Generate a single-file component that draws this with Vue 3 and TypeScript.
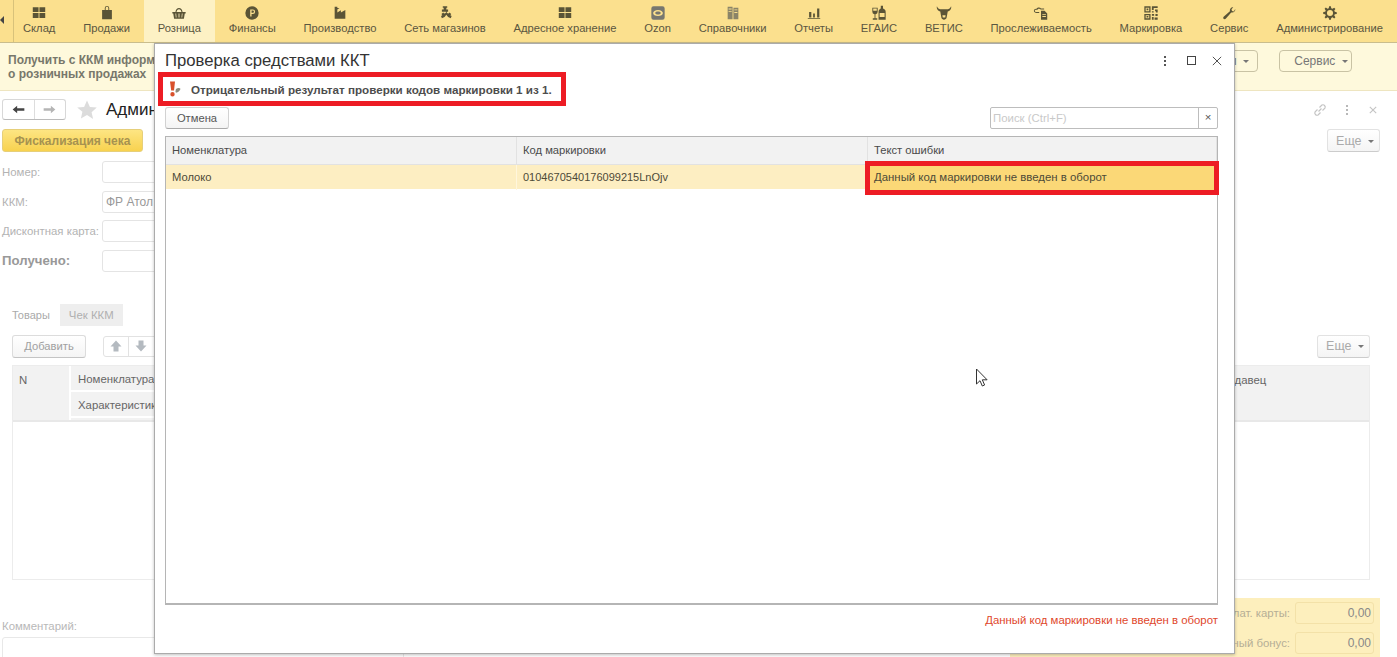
<template>
  <div class="app">
    <nav class="topnav">
      <div class="collapse"><span class="collapse-arrow"></span></div>
      <div class="nav-items">
        <div v-for="item in navItems" :key="item.label" class="nav-item" :class="{ active: item.active }">
          <svg class="nav-icon" viewBox="0 0 18 18" :style="{ fill: item.color || '#5a5436' }">
            <path fill-rule="evenodd" :d="item.icon" />
          </svg>
          <span>{{ item.label }}</span>
        </div>
      </div>
    </nav>

    <div class="notice">
      <div class="notice-text">Получить с ККМ информацию<br />о розничных продажах</div>
      <div class="notice-buttons">
        <button class="outline-btn">Отчеты <i class="caret"></i></button>
        <button class="outline-btn service">Сервис <i class="caret"></i></button>
      </div>
    </div>

    <main class="doc">
      <div class="doc-head">
        <div class="arrows">
          <span class="arrow-cell">
            <svg class="arrow-dark" viewBox="0 0 14 10"><path d="M0.5 5L5.5.8v2.700H13.5v3H5.5v2.700z" /></svg>
          </span>
          <span class="arrow-cell">
            <svg class="arrow-light" viewBox="0 0 14 10"><path d="M13.5 5L8.5.8v2.700H.5v3h8v2.700z" /></svg>
          </span>
        </div>
        <svg class="star" viewBox="0 0 20 20"><path d="M10 0.5l2.900 6.400 6.900.7-5.200 4.600 1.500 6.900L10 15.100l-6.100 3.500 1.500-6.900L.2 7.600l6.900-.7z" /></svg>
        <h1 class="doc-title">Администратор</h1>
        <div class="doc-tools">
          <svg class="tool-link" viewBox="0 0 16 16"><path d="M6.5 9.5l3-3M5.5 7.5l-2.400 2.400a2.200 2.200 0 0 0 3 3l2.400-2.400M10.5 8.5l2.400-2.400a2.200 2.200 0 0 0-3-3L7.5 5.5" /></svg>
          <span class="dots"><i></i><i></i><i></i></span>
          <svg class="tool-close" viewBox="0 0 10 10"><path d="M1 1l8 8M9 1L1 9" /></svg>
        </div>
      </div>

      <div class="commands">
        <button class="fiscal-btn">Фискализация чека</button>
        <button class="more-btn">Еще <i class="caret"></i></button>
      </div>

      <div class="fields">
        <template v-for="field in fields" :key="field.label">
          <label :class="{ strong: field.strong }">{{ field.label }}</label>
          <div class="field-input">{{ field.value }}</div>
        </template>
      </div>

      <div class="tabs">
        <span class="tab">Товары</span>
        <span class="tab current">Чек ККМ</span>
      </div>

      <div class="list-toolbar">
        <button class="plain-btn">Добавить</button>
        <div class="updown">
          <span class="updown-cell"><svg viewBox="0 0 12 12"><path d="M6 .5l5.5 6H8.5V11.5h-5V6.5H.5z" /></svg></span>
          <span class="updown-cell"><svg viewBox="0 0 12 12"><path d="M6 11.5L.5 5.5h3V.5h5v5h3z" /></svg></span>
        </div>
        <button class="more-btn push">Еще <i class="caret"></i></button>
      </div>

      <div class="goods">
        <div class="goods-head">
          <div class="goods-n">N</div>
          <div class="goods-name">
            <div>Номенклатура</div>
            <div>Характеристика</div>
          </div>
          <div class="goods-seller">Продавец</div>
        </div>
      </div>

      <div class="doc-bottom">
        <div class="comment">
          <label>Комментарий:</label>
          <div class="comment-input"></div>
        </div>
        <div class="totals">
          <div v-for="total in totals" :key="total" class="total-row">
            <label>{{ total }}</label>
            <div class="total-input">0,00</div>
          </div>
        </div>
      </div>
    </main>

    <section class="modal">
      <header class="modal-head">
        <h2>Проверка средствами ККТ</h2>
        <div class="modal-tools">
          <span class="dots dark"><i></i><i></i><i></i></span>
          <span class="maximize"></span>
          <svg class="modal-close" viewBox="0 0 12 12"><path d="M1 1l10 10M11 1L1 11" /></svg>
        </div>
      </header>

      <div class="message">
        <svg class="message-icon" viewBox="0 0 12 16">
          <path fill="#d9512c" d="M1 .5h5L5 9.5H2.200zM3.5 11a2.200 2.200 0 1 1 0 4.400 2.200 2.200 0 0 1 0-4.400z" />
          <path fill="#8c8c7c" d="M7 8c1.800-1.500 3.800-1.200 4.300-.4.500 1-1.200 3.200-3.300 4-1 .3-1.600-.2-1.500-1.100 0-.9.200-1.800.5-2.500z" />
        </svg>
        <span>{{ resultText }}</span>
      </div>

      <div class="modal-toolbar">
        <button class="plain-btn cancel">Отмена</button>
        <div class="search">
          <span class="search-text">Поиск (Ctrl+F)</span>
          <span class="search-clear">×</span>
        </div>
      </div>

      <div class="check-table">
        <div class="check-row head">
          <div v-for="col in columns" :key="col" class="check-cell">{{ col }}</div>
        </div>
        <div class="check-row selected">
          <div class="check-cell">Молоко</div>
          <div class="check-cell code">0104670540176099215LnOjv</div>
          <div class="check-cell error">{{ errorText }}</div>
        </div>
      </div>

      <footer class="modal-foot">{{ errorText }}</footer>
    </section>

    <svg class="cursor" viewBox="0 0 14 20">
      <path d="M1.5 1v15l3.500-3.300 2.300 5.300 2.300-1-2.300-5.200h4.800z" />
    </svg>
  </div>
</template>

<script setup lang="ts">
interface NavItem {
  label: string
  icon: string
  active?: boolean
  color?: string
}

const grid = 'M2 2.5h6.5V8H2zM9.5 2.5H16V8H9.5zM2 9h6.5v5.5H2zM9.5 9H16v5.500H9.5z'

const navItems: NavItem[] = [
  { label: 'Склад', icon: grid },
  { label: 'Продажи', icon: 'M3.5 5.5h11V16h-11zM6.5 5.5V3.5a2.500 2.500 0 0 1 5 0v2h-1v-2a1.500 1.500 0 0 0-3 0v2z' },
  {
    label: 'Розница',
    active: true,
    icon: 'M1.5 8h15v1.500h-1L14.5 15.5h-11L2.5 9.5h-1zM5 9.5l.4 4.500h.8l-.4-4.500zM8.5 9.5V14h1V9.5zM12.2 9.5l-.4 4.500h.8l.4-4.500zM5 8c.3-2.800 2-4.500 4-4.500s3.700 1.700 4 4.500h-1.200c-.3-2-1.400-3.300-2.800-3.300S6.500 6 6.200 8z'
  },
  {
    label: 'Финансы',
    icon: 'M9 1.5a7.500 7.500 0 1 0 0 15 7.500 7.500 0 0 0 0-15zM7 5h3a2.500 2.500 0 0 1 0 5H8.5v3H7zM8.5 6.3v2.400H10a1.200 1.200 0 0 0 0-2.400z'
  },
  { label: 'Производство', icon: 'M3 2h3v1.500h2.500L6 5v3.500l4-2.500v2.500l5-3V15.5H3z' },
  {
    label: 'Сеть магазинов',
    icon: 'M6.5 1.500h5v1.500h-1v2h2v2.500h-1.500V9l2 .5 1-1 2 1.500-1 1.500 1.500 1-1 2.500-3-1.500-2-2.500-2 2.500-3 1.500-1-2.500 1.500-1-1-1.500 2-1.500 1 1 2-.5V7.500H5.500V5h2V3h-1z'
  },
  { label: 'Адресное хранение', icon: grid },
  {
    label: 'Ozon',
    color: '#77776f',
    icon: 'M4 1.5h10a2.500 2.500 0 0 1 2.500 2.500v10a2.500 2.500 0 0 1-2.500 2.500H4A2.500 2.500 0 0 1 1.5 14V4A2.500 2.500 0 0 1 4 1.500zM9 5.5C5.800 5.500 3.500 7 3.500 9S5.800 12.500 9 12.500 14.500 11 14.500 9 12.200 5.500 9 5.500zM9 7.300c1.900 0 3.200.7 3.200 1.700S10.900 10.700 9 10.700 5.800 10 5.800 9 7.100 7.300 9 7.300z'
  },
  {
    label: 'Справочники',
    color: '#8a8468',
    icon: 'M3 2h5.5v14H3zM4 4v1h3.500V4zM4 7v1h3.500V7zM9.5 3H15v13H9.5zM10.5 5v1H14V5zM10.5 8v1H14V8z'
  },
  { label: 'Отчеты', icon: 'M2 14.500h14v1H2zM3.5 8h2.500v6H3.5zM8 9.500h2v4.500H8zM12.5 4h2.500v10h-2.500z' },
  {
    label: 'ЕГАИС',
    icon: 'M1.5 3h6v4.500a3 3 0 0 1-2.500 3V15h2v1.500H2V15h2v-4.500a3 3 0 0 1-2.500-3zM2.5 4v2.500h4V4zM11 .8h2.500V4c1.700.8 3 1.800 3 3.500v9h-8v-9c0-1.700 1.300-2.700 2.500-3.500zM9.700 9v4.500h5.600V9z'
  },
  {
    label: 'ВЕТИС',
    icon: 'M1 1.500c.7 1.800 1.800 2.800 3.500 3.200h9c1.700-.4 2.800-1.400 3.500-3.200.6 2.400-.4 4.400-2.700 5.400-.4 0-.8 0-1.100.4L12 14c-.4 1.500-1.500 2.500-3 2.500S6.400 15.500 6 14L4.800 7.300C4.500 6.900 4 6.900 3.700 6.900 1.400 5.900.4 3.900 1 1.500zM7.200 11.500l.4 2.500h2.800l.4-2.500z'
  },
  {
    label: 'Прослеживаемость',
    icon: 'M1 6.500C1 5 2.500 4 4 4.300 5 2.500 8 2.500 9 4h3.500v1H8.500C7.800 3.700 5.500 3.800 4.700 5.500 3.500 5 2 5.500 2 6.500S3 8 4 8h3v1H4C2.300 9 1 8 1 6.500zM9 6.500h4l3 3v7H9zM10.500 10v1h4v-1zM10.500 12.500v1h4v-1z'
  },
  {
    label: 'Маркировка',
    icon: 'M1.5 1.500h7v7h-7zM3 3v4h4V3zM4 4h2v2H4zM10 1.500h6.500v2H12v2h-2zM13.5 5h3v3.500h-2V7h-1zM10 7h2v1.500h-2zM1.5 10h7v6.500h-7zM3 11.500V15h4v-3.500zM4 12.500h2V14H4zM10 10h2.500v2H10zM14 10h2.500v2.500H14zM10 13.500h2v3h-2zM13 14h3.500v2.500H13z'
  },
  {
    label: 'Сервис',
    icon: 'M16 4.500c.5 2-1.500 4.500-4.500 3.800L5.800 15c-.8 1-2 1.300-2.800.6s-.6-2 .3-2.800L10 7c-.6-3 1.800-5 3.800-4.500l-2 2.300.6 2 2 .5z'
  },
  {
    label: 'Администрирование',
    icon: 'M8 1.500h2l.4 2.200 1.400.6 1.900-1.300 1.400 1.400-1.300 1.900.6 1.400 2.200.4v2l-2.200.4-.6 1.400 1.300 1.900-1.400 1.400-1.900-1.300-1.400.6-.4 2.200H8l-.4-2.200-1.400-.6-1.900 1.300-1.400-1.400 1.300-1.900-.6-1.400L1.400 10V8l2.200-.4.6-1.400-1.300-1.900 1.400-1.400 1.900 1.300 1.400-.6zM9 5.600a3.400 3.400 0 1 0 0 6.800 3.400 3.400 0 0 0 0-6.800z'
  }
]

const fields = [
  { label: 'Номер:', value: '' },
  { label: 'ККМ:', value: 'ФР Атол' },
  { label: 'Дисконтная карта:', value: '' },
  { label: 'Получено:', value: '', strong: true }
]

const totals = ['Оплат. карты:', 'Начисленный бонус:']
const columns = ['Номенклатура', 'Код маркировки', 'Текст ошибки']
const resultText = 'Отрицательный результат проверки кодов маркировки 1 из 1.'
const errorText = 'Данный код маркировки не введен в оборот'
</script>

<style>
html,
body {
  margin: 0;
  background: #fff;
}
</style>

<style scoped>
.app {
  position: relative;
  width: 1397px;
  height: 657px;
  overflow: hidden;
  background: #fff;
  font-family: "Liberation Sans", Arial, sans-serif;
  font-size: 11.4px;
  color: #4a4a4a;
}

button {
  font-family: inherit;
  font-size: 12px;
  padding: 0;
  box-sizing: border-box;
}

.topnav {
  display: flex;
  height: 43px;
  background: #fbe08e;
  box-sizing: border-box;
  border-bottom: 1px solid #c9bd8d;
}

.collapse {
  flex: none;
  width: 13px;
  border-right: 1px solid #d8c27a;
  display: flex;
  align-items: center;
}

.collapse-arrow {
  border: 4px solid transparent;
  border-right: 4px solid #444;
  border-left: 0;
  margin-top: -2px;
  height: 0;
}

.nav-items {
  display: flex;
}

.nav-item {
  display: flex;
  flex-direction: column;
  align-items: center;
  padding: 4px 13.9px 0;
  font-size: 11.2px;
  color: #5a5640;
  white-space: nowrap;
}

.nav-item:first-child {
  padding-left: 9px;
}

.nav-item.active {
  background: #fdf1c4;
}

.nav-icon {
  width: 16px;
  height: 16px;
  margin: 1px 0;
}

.notice {
  display: flex;
  justify-content: space-between;
  height: 48px;
  box-sizing: border-box;
  padding: 7px 45px 0 8px;
  background: #fef9dc;
  border-bottom: 1px solid #eee5c0;
}

.notice-text {
  font-size: 12px;
  font-weight: bold;
  line-height: 14px;
  color: #77776b;
  margin-top: 3px;
}

.notice-buttons {
  display: flex;
  gap: 21px;
}

.outline-btn {
  height: 22px;
  width: 72px;
  background: transparent;
  border: 1px solid #c9c3a4;
  border-radius: 4px;
  color: #777;
}

.outline-btn.service {
  width: 73px;
  padding-left: 11px;
}

.caret {
  display: inline-block;
  border: 3px solid transparent;
  border-top: 3px solid #777;
  border-bottom: 0;
  margin-left: 3px;
  vertical-align: 2px;
}

.doc {
  display: flex;
  flex-direction: column;
  height: 566px;
  box-sizing: border-box;
  padding-top: 8px;
  color: #9a9a9a;
}

.doc > * {
  flex-shrink: 0;
}

.doc-head {
  display: flex;
  align-items: center;
  height: 21px;
  padding: 0 20px 0 2px;
}

.arrows {
  display: flex;
  width: 64px;
  height: 21px;
  box-sizing: border-box;
  border: 1px solid #d8d8d8;
  border-bottom-color: #bbb;
  border-radius: 3px;
}

.arrow-cell {
  flex: 1;
  display: flex;
  align-items: center;
  justify-content: center;
}

.arrow-cell:first-child {
  border-right: 1px solid #ddd;
}

.arrow-cell svg {
  width: 13px;
  height: 9px;
}

.arrow-dark {
  fill: #444;
}

.arrow-light {
  fill: #b5b5b5;
}

.star {
  width: 20px;
  height: 20px;
  margin-left: 11px;
  fill: #dcdcdc;
}

.doc-title {
  margin: 0 0 0 9px;
  font-size: 17px;
  font-weight: normal;
  color: #222;
}

.doc-tools {
  margin-left: auto;
  display: flex;
  align-items: center;
  gap: 18px;
}

.tool-link {
  width: 16px;
  height: 16px;
  fill: none;
  stroke: #c4c4c4;
  stroke-width: 1.2;
}

.tool-close {
  width: 8px;
  height: 8px;
  margin-left: 3px;
  fill: none;
  stroke: #c4c4c4;
  stroke-width: 1.4;
}

.dots {
  display: flex;
  flex-direction: column;
  gap: 2px;
}

.dots i {
  width: 2px;
  height: 2px;
  background: #b8b8b8;
}

.dots.dark {
  margin-right: 5px;
}

.dots.dark i {
  background: #555;
}

.commands {
  display: flex;
  justify-content: space-between;
  padding: 0 17px 0 2px;
  margin-top: 9px;
}

.fiscal-btn {
  width: 141px;
  height: 23px;
  border: 1px solid #e6cf7a;
  border-radius: 3px;
  background: linear-gradient(#fde583, #f8d24f);
  color: #a69250;
  font-weight: bold;
}

.more-btn {
  width: 53px;
  height: 23px;
  padding-left: 3px;
  background: linear-gradient(#fff, #f4f4f4);
  border: 1px solid #e2e2e2;
  border-bottom-color: #ccc;
  border-radius: 3px;
  font-size: 12.5px;
  color: #aaa;
}

.fields {
  display: grid;
  grid-template-columns: 100px 240px;
  grid-auto-rows: 22px;
  row-gap: 7.5px;
  margin: 9px 0 0 2px;
  align-items: center;
}

.fields label {
  color: #b3b3b3;
  white-space: nowrap;
}

.fields label.strong {
  font-size: 13.2px;
  font-weight: bold;
  color: #999;
}

.field-input {
  height: 22px;
  box-sizing: border-box;
  border: 1px solid #e4e4e4;
  border-radius: 3px;
  line-height: 20px;
  padding-left: 3px;
  font-size: 12px;
  color: #999;
}

.tabs {
  display: flex;
  align-items: center;
  height: 22px;
  margin-top: 32px;
  padding-left: 12px;
  gap: 10px;
}

.tab {
  font-size: 11px;
  color: #aaa;
}

.tab.current {
  padding: 0 9px;
  line-height: 22px;
  background: #eeeeee;
  font-size: 11.4px;
  color: #b0b0b0;
}

.list-toolbar {
  display: flex;
  align-items: center;
  height: 23px;
  margin-top: 9px;
  padding: 0 27px 0 12px;
}

.plain-btn {
  height: 23px;
  width: 74px;
  background: linear-gradient(#fff, #f4f4f4);
  border: 1px solid #dcdcdc;
  border-bottom-color: #c4c4c4;
  border-radius: 3px;
  font-size: 11.2px;
  color: #a0a0a0;
}

.updown {
  display: flex;
  height: 21px;
  width: 100px;
  margin-left: 17px;
  box-sizing: border-box;
  border: 1px solid #e2e2e2;
  border-radius: 3px;
}

.updown-cell {
  display: flex;
  align-items: center;
  justify-content: center;
  width: 24px;
}

.updown-cell:first-child {
  border-right: 1px solid #e2e2e2;
}

.updown svg {
  width: 12px;
  height: 12px;
  fill: #b4bac0;
}

.push {
  margin-left: auto;
}

.goods {
  height: 215px;
  margin: 7px 27px 0 12px;
  border: 1px solid #ececec;
  box-sizing: border-box;
}

.goods-head {
  display: flex;
  height: 54px;
  background: #f2f2f2;
  border-bottom: 2px solid #e8e8e8;
  color: #666;
}

.goods-n {
  width: 58px;
  padding: 8px 0 0 6px;
  box-sizing: border-box;
  border-right: 2px solid #fff;
}

.goods-name {
  width: 300px;
}

.goods-name div {
  height: 26px;
  box-sizing: border-box;
  padding: 7px 0 0 7px;
  border-bottom: 2px solid #fff;
}

.goods-seller {
  margin-left: auto;
  width: 155px;
  padding-top: 8px;
}

.doc-bottom {
  display: flex;
  justify-content: space-between;
  margin-top: 18px;
  padding: 0 17px 0 2px;
}

.comment {
  padding-top: 21px;
  color: #b8b8b8;
}

.comment label {
  display: block;
  line-height: 14px;
}

.comment-input {
  width: 400px;
  height: 30px;
  margin-top: 4px;
  border: 1px solid #e8e8e8;
  border-radius: 3px;
}

.totals {
  width: 370px;
  height: 60px;
  box-sizing: border-box;
  background: #fdefbd;
  padding: 4px 6px 0 0;
  display: flex;
  flex-direction: column;
  gap: 8px;
}

.total-row {
  display: flex;
  justify-content: flex-end;
  align-items: center;
  gap: 5px;
  color: #b5ae96;
}

.total-input {
  width: 79px;
  height: 22px;
  box-sizing: border-box;
  border: 1px solid #f3e1a8;
  border-radius: 3px;
  text-align: right;
  line-height: 20px;
  padding-right: 2px;
  font-size: 12px;
  color: #888;
}

.modal {
  position: absolute;
  left: 154px;
  top: 43px;
  width: 1081px;
  height: 611px;
  box-sizing: border-box;
  display: flex;
  flex-direction: column;
  background: #fff;
  border: 1px solid #ababab;
  box-shadow: 0 1px 3px rgba(0, 0, 0, 0.25);
  color: #4a4a4a;
}

.modal-head {
  display: flex;
  align-items: center;
  justify-content: space-between;
  height: 28px;
  padding: 5px 12px 0 10px;
  box-sizing: border-box;
}

.modal-head h2 {
  margin: 0;
  font-size: 16.7px;
  font-weight: normal;
  color: #333;
}

.modal-tools {
  display: flex;
  align-items: center;
  gap: 16px;
}

.maximize {
  width: 7px;
  height: 7px;
  border: 1px solid #444;
}

.modal-close {
  width: 10px;
  height: 10px;
  fill: none;
  stroke: #444;
  stroke-width: 1.1;
}

.message {
  display: flex;
  align-items: center;
  width: 408px;
  height: 34px;
  margin-left: 3px;
  box-sizing: border-box;
  border: 5px solid #ed1c24;
  padding-left: 6px;
  background: #fff;
  font-weight: bold;
  font-size: 11.65px;
  color: #4d4d4d;
}

.message-icon {
  width: 12px;
  height: 16px;
  margin-right: 10px;
}

.modal-toolbar {
  display: flex;
  justify-content: space-between;
  align-items: center;
  margin-top: 1px;
  padding: 0 16px 0 10px;
  height: 22px;
}

.cancel {
  width: 64px;
  height: 22px;
  color: #555;
  border-color: #d2d2d2;
  border-bottom-color: #aaa;
}

.search {
  display: flex;
  width: 228px;
  height: 22px;
  box-sizing: border-box;
  border: 1px solid #bdbdbd;
  border-radius: 2px;
}

.search-text {
  flex: 1;
  line-height: 20px;
  padding-left: 2px;
  color: #c9c9c9;
}

.search-clear {
  width: 18px;
  text-align: center;
  line-height: 19px;
  border-left: 1px solid #bdbdbd;
  color: #555;
}

.check-table {
  height: 469px;
  margin: 7px 16px 0 10px;
  box-sizing: border-box;
  border: 1px solid #b5b5b5;
  border-bottom-width: 2px;
}

.check-row {
  display: grid;
  grid-template-columns: 351px 351px 1fr;
  font-size: 11.2px;
}

.check-row.head {
  height: 27px;
  background: #f2f2f2;
  border-bottom: 1px solid #e2e2e2;
  line-height: 26px;
}

.check-row.selected {
  height: 24px;
  background: #fdeec2;
  line-height: 25px;
  color: #4d4a38;
}

.check-cell {
  padding-left: 6px;
  border-right: 1px solid #e2e2e2;
  white-space: nowrap;
}

.selected .check-cell {
  border-right-color: #fff6dc;
}

.check-cell.code {
  font-size: 11px;
}

.check-cell.error {
  position: relative;
  background: #fbd877;
  border-right: 0;
  font-size: 11.4px;
}

.check-cell.error::after {
  content: "";
  position: absolute;
  inset: -4px -2px -5px -3px;
  border: 5px solid #ed1c24;
}

.modal-foot {
  margin-top: 8px;
  padding-right: 16px;
  text-align: right;
  line-height: 14px;
  color: #e0472b;
}

.cursor {
  position: absolute;
  left: 975px;
  top: 368px;
  width: 14px;
  height: 20px;
  fill: #fff;
  stroke: #333;
  stroke-width: 1;
}
</style>
